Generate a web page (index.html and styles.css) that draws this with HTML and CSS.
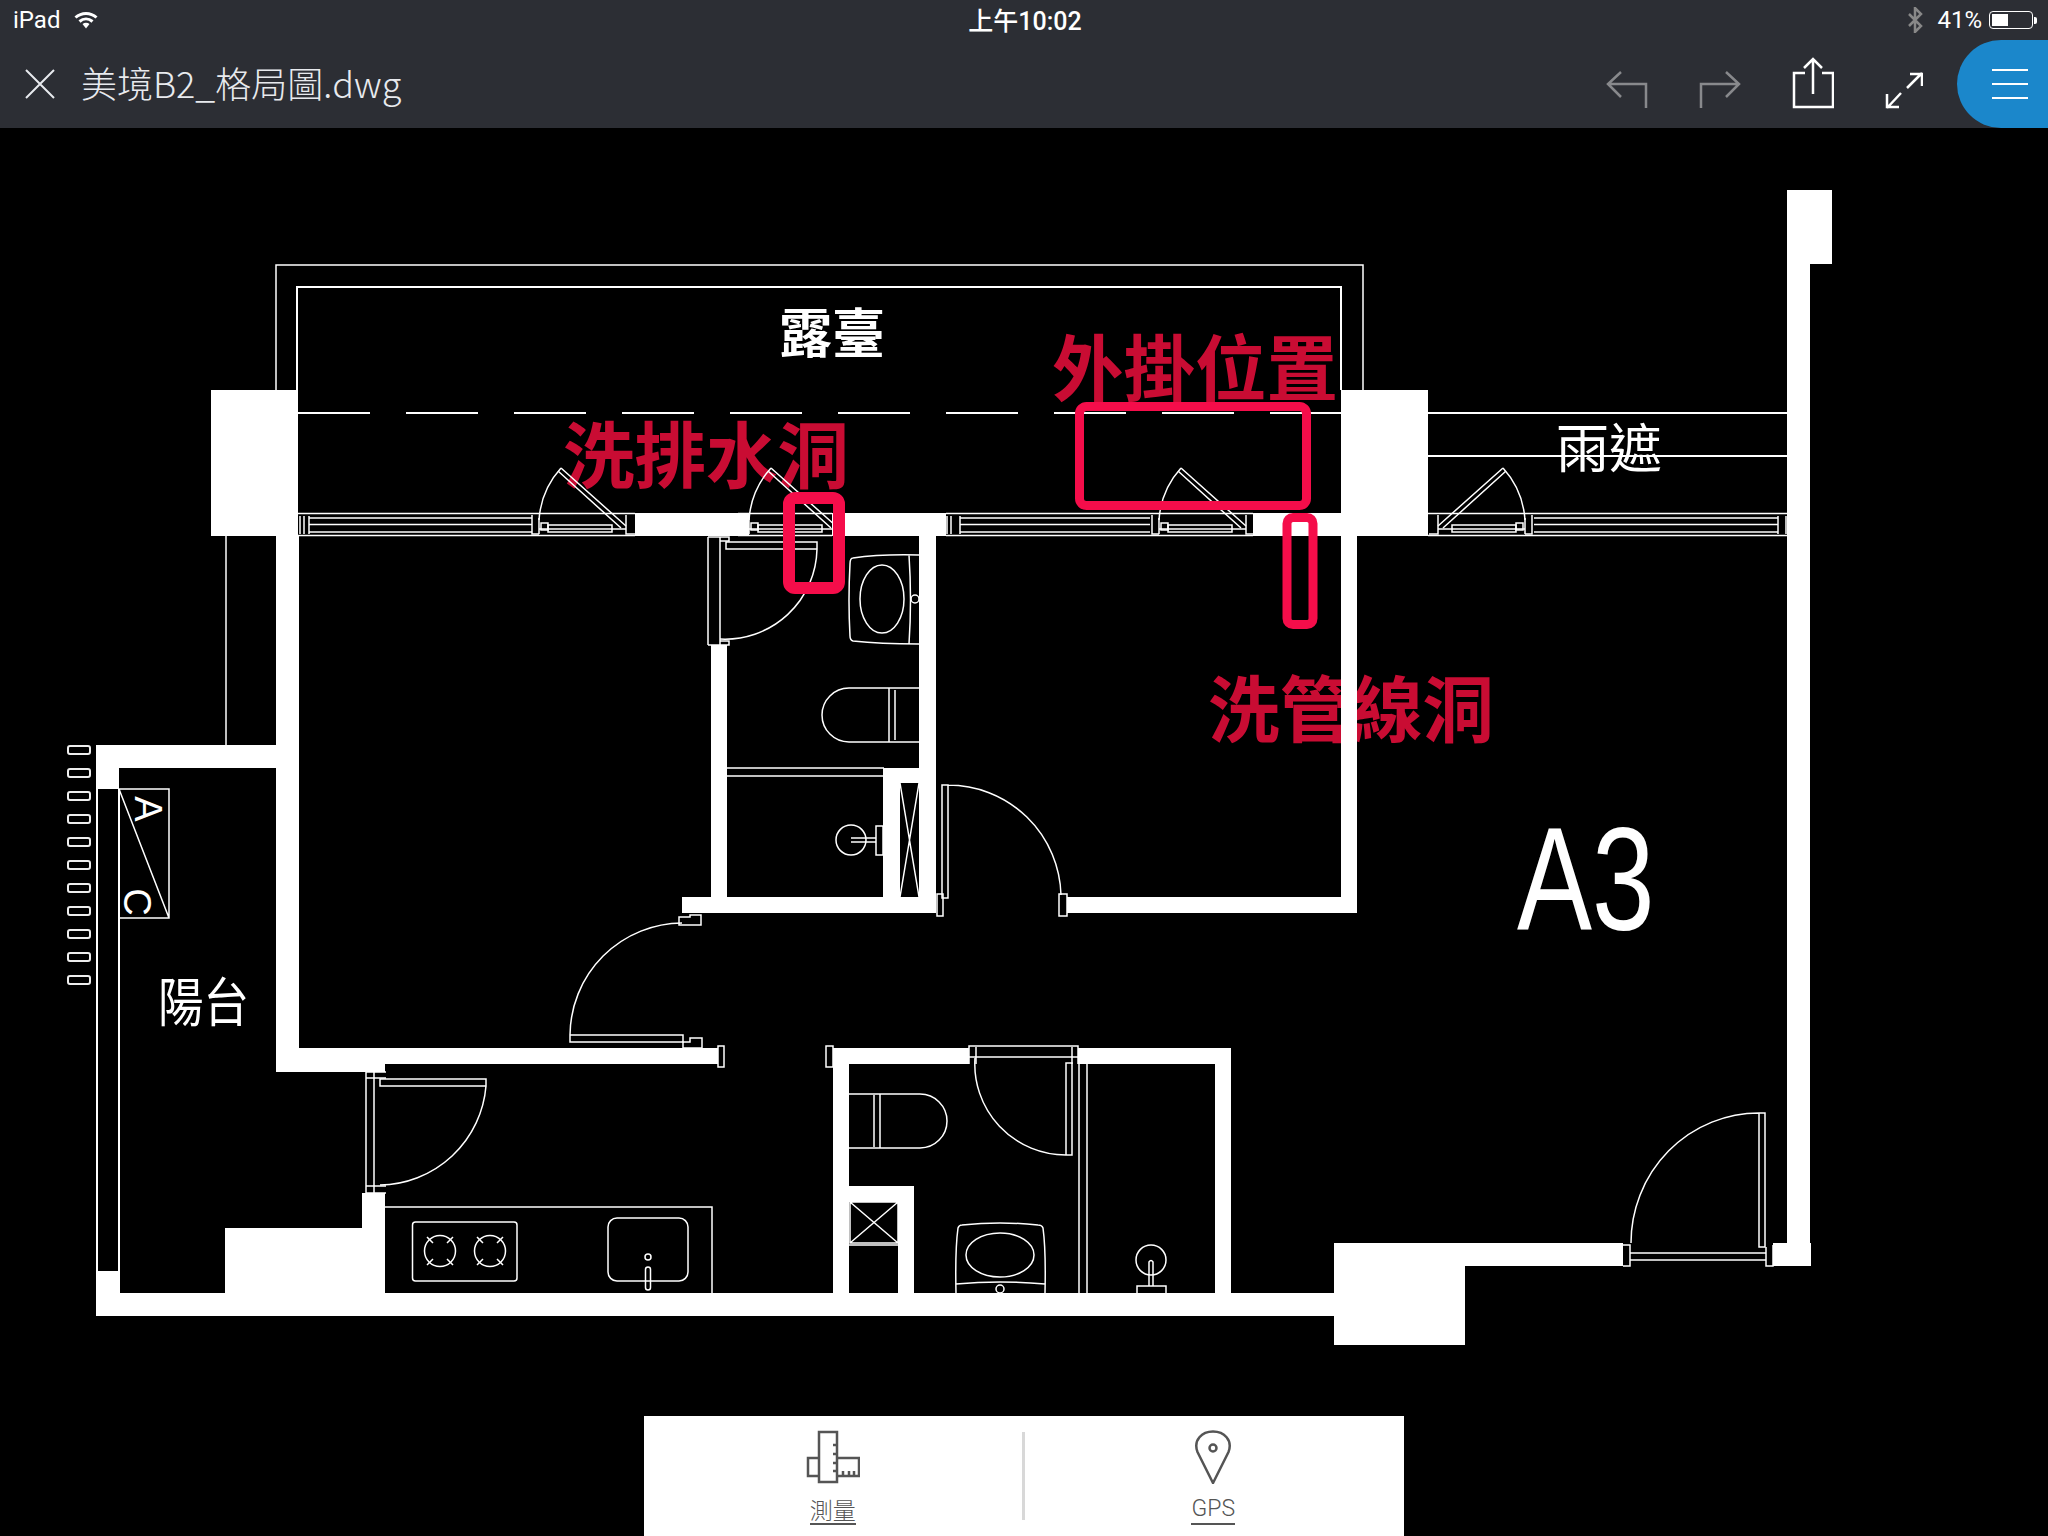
FILE: index.html

```html
<!DOCTYPE html>
<html>
<head>
    <meta name="viewport" content="width=device-width, initial-scale=1.0">
    <title>美境B2_格局圖.dwg</title>
    <link rel="stylesheet" href="styles.css">
</head>
<body>
    <div class="header">
        <div class="status-bar">
            <div class="status-left">
                <span>iPad</span>
                <svg class="wifi-icon" width="24" height="18" viewBox="0 0 24 18">
                    <path class="wifi-arc" d="M1.5 6.5C7.5 1 16.5 1 22.5 6.5"/>
                    <path class="wifi-arc" d="M5.5 10.5C9.5 7 14.5 7 18.5 10.5"/>
                    <path class="wifi-dot" d="M8.5 13C10.5 11.4 13.500 11.4 15.500 13L12 17.500Z"/>
                </svg>
            </div>
            <div class="status-time">上午10:02</div>
            <div class="status-right">
                <svg class="bt-icon" width="16" height="26" viewBox="0 0 16 26">
                    <path d="M2 7L14 19L8 25V1L14 7L2 19"/>
                </svg>
                <span>41%</span>
                <div class="battery"><div class="battery-level"></div></div>
                <div class="battery-tip"></div>
            </div>
        </div>
        <div class="toolbar">
            <svg class="close-icon" width="30" height="30" viewBox="0 0 30 30">
                <path d="M1 1L29 29M29 1L1 29"/>
            </svg>
            <div class="file-title">美境B2_格局圖.dwg</div>
            <div class="tool-icons">
                <svg class="tool-icon tool-off" width="42" height="38" viewBox="0 0 42 38">
                    <path d="M15 1L2 13L15 26M2 13H40V37"/>
                </svg>
                <svg class="tool-icon tool-off" width="42" height="38" viewBox="0 0 42 38">
                    <path d="M2 37V13H40M27 1L40 13L27 26"/>
                </svg>
                <svg class="tool-icon" width="42" height="52" viewBox="0 0 42 52">
                    <path d="M13 16H2V50H41V16H30M21 37V2M12 11L21 2L30 11"/>
                </svg>
                <svg class="tool-icon" width="38" height="37" viewBox="0 0 38 37">
                    <path d="M22 16L37 1M25 2H37V14M16 21L2 36M2 22V35H14"/>
                </svg>
            </div>
            <div class="menu-btn">
                <span></span>
                <span></span>
                <span></span>
            </div>
        </div>
    </div>

    <div class="drawing">
        <svg class="plan" width="2048" height="1408" viewBox="0 128 2048 1408">
            <defs>
                <g id="sliding-door">
                    <path d="M539 520Q541 490 561 468"/>
                    <path d="M561 468L626 526M558 471L621 528"/>
                    <path d="M539 518V534M548 525H612V532H548ZM539 529H626"/>
                    <path d="M532 515V534H539M626 515V534H635"/>
                    <rect x="541" y="523" width="7" height="7"/>
                </g>
            </defs>

            <!-- terrace outline -->
            <path class="line" d="M276 390V265H1363V390"/>
            <path class="line-bold" d="M297 390V287H1341V390"/>
            <path class="line-bold dash" d="M298 413H1341"/>
            <path class="line-bold" d="M1428 413H1787M1428 456H1787"/>
            <path class="line" d="M226 536V745"/>

            <!-- red labels go under the door lines -->
            <text class="red-label" x="563" y="482">洗排水洞</text>
            <text class="red-label" x="1052" y="395">外掛位置</text>
            <text class="red-label" x="1208" y="736">洗管線洞</text>

            <!-- walls -->
            <g class="wall">
                <rect x="211" y="390" width="87" height="146"/>
                <rect x="1341" y="390" width="87" height="146"/>
                <rect x="635" y="513" width="114" height="23"/>
                <rect x="832" y="513" width="114" height="23"/>
                <rect x="1253" y="513" width="88" height="23"/>
                <rect x="276" y="536" width="23" height="536"/>
                <rect x="276" y="1048" width="109" height="24"/>
                <rect x="385" y="1048" width="333" height="16"/>
                <rect x="96" y="745" width="180" height="23"/>
                <rect x="96" y="745" width="23" height="44"/>
                <rect x="96" y="789" width="2" height="482"/>
                <rect x="118" y="789" width="2" height="504"/>
                <rect x="96" y="1271" width="24" height="22"/>
                <rect x="96" y="1293" width="1238" height="23"/>
                <rect x="225" y="1228" width="160" height="65"/>
                <rect x="362" y="1193" width="23" height="35"/>
                <rect x="1334" y="1243" width="131" height="102"/>
                <rect x="1465" y="1243" width="158" height="23"/>
                <rect x="1773" y="1243" width="38" height="23"/>
                <rect x="1787" y="264" width="23" height="979"/>
                <rect x="1787" y="190" width="45" height="74"/>
                <rect x="711" y="645" width="16" height="252"/>
                <rect x="919" y="536" width="17" height="377"/>
                <rect x="682" y="897" width="254" height="16"/>
                <rect x="883" y="768" width="36" height="15"/>
                <rect x="883" y="783" width="17" height="114"/>
                <rect x="1341" y="536" width="16" height="377"/>
                <rect x="1067" y="897" width="290" height="16"/>
                <rect x="833" y="1048" width="16" height="245"/>
                <rect x="849" y="1048" width="120" height="16"/>
                <rect x="1078" y="1048" width="153" height="16"/>
                <rect x="1215" y="1064" width="16" height="229"/>
                <rect x="849" y="1186" width="65" height="16"/>
                <rect x="898" y="1202" width="16" height="91"/>
            </g>

            <!-- windows along the terrace -->
            <g class="line">
                <path d="M298 513.500H635M298 535.500H635M738 513.500H832M738 535.500H832M946 513.500H1253M946 535.500H1253M1428 513.500H1787M1428 535.500H1787"/>
                <path d="M309 518H532M309 524.500H532M309 532H532"/>
                <path d="M300 516V534M304 516V534M309 516V534"/>
                <path d="M960 518H1150M960 524.500H1150M960 532H1150M947 516V534M951 516V534M960 516V534"/>
                <path d="M1534 518H1778M1534 524.500H1778M1534 532H1778M1778 516V534M1786 516V534"/>
                <use href="#sliding-door"/>
                <use href="#sliding-door" x="210"/>
                <use href="#sliding-door" x="620"/>
                <use href="#sliding-door" transform="translate(2064 0) scale(-1 1)"/>
            </g>

            <!-- wc door and fittings -->
            <g class="line">
                <path d="M708 537V645M720 537V645M708 645H729V641H720M708 537H729V541H720"/>
                <path d="M726 542H817V549H726ZM817 549A92 92 0 0 1 720 639"/>
                <path d="M853 558Q880 554 919 555M919 644Q880 644 853 641Q850 640 850 636Q848 600 850 564Q850 558 853 558M909 555Q912 600 909 644"/>
                <ellipse cx="882" cy="599" rx="22" ry="34"/>
                <circle cx="915" cy="599" r="4"/>
                <path d="M919 688H849A27 27 0 0 0 849 742H919M889 688V742M895 690V740"/>
                <path d="M727 768H884M727 776H884"/>
                <circle cx="851" cy="840" r="15"/>
                <path d="M851 838H876M851 842H876M876 826H883V855H876Z"/>
                <path d="M900 783L919 897M919 783L900 897"/>
            </g>

            <!-- room door -->
            <g class="line">
                <path d="M942 785H948V898H942ZM948 785A113 113 0 0 1 1061 895"/>
                <path d="M937 894H943V916H937ZM1059 894H1067V916H1059Z"/>
            </g>

            <!-- living room door -->
            <g class="line">
                <path d="M570 1035H683V1042H570ZM570 1035A113 113 0 0 1 682 923"/>
                <path d="M679 917H690V915H701V925H679ZM683 1042H690V1038H702V1048H683Z"/>
                <path d="M718 1046H724V1067H718ZM826 1046H833V1067H826Z"/>
            </g>

            <!-- balcony door and kitchen -->
            <g class="line">
                <path d="M366 1072V1193M374 1072V1193M366 1072H386M366 1078H386M366 1186H386M366 1193H386"/>
                <path d="M380 1079H486V1086H380ZM486 1086A108 108 0 0 1 380 1185"/>
                <path d="M385 1207H712V1293"/>
                <rect x="412.500" y="1222" width="104.500" height="59" rx="3"/>
                <circle cx="440" cy="1251" r="15.500"/>
                <circle cx="490" cy="1251" r="15.500"/>
                <path d="M427 1237L433 1243M453 1237L447 1243M427 1265L433 1259M453 1265L447 1259"/>
                <path d="M477 1237L483 1243M503 1237L497 1243M477 1265L483 1259M503 1265L497 1259"/>
                <rect x="608" y="1218" width="80" height="63" rx="9"/>
                <circle cx="648" cy="1257" r="3"/>
                <rect x="645.500" y="1267" width="5" height="23" rx="2.500"/>
            </g>

            <!-- bathroom -->
            <g class="line">
                <path d="M969 1064V1046H1078V1064M969 1057H1078M976 1047V1064M1072 1047V1064"/>
                <path d="M975 1058A91 91 0 0 0 1066 1155H1072V1063H1066V1155"/>
                <path d="M1079 1064V1293M1087 1064V1293"/>
                <path d="M849 1094H920A27 27 0 0 1 920 1148H849M874 1095V1147M880 1094V1148"/>
                <path d="M850 1202H898V1243H850ZM850 1202L898 1243M898 1202L850 1243M849 1245H898"/>
                <path d="M956 1293Q955 1250 958 1228Q959 1225 962 1225Q1000 1221 1038 1225Q1042 1225 1043 1228Q1046 1250 1045 1293M956 1284Q1000 1280 1045 1284"/>
                <ellipse cx="1000" cy="1255" rx="34" ry="22"/>
                <circle cx="1000" cy="1289" r="4"/>
                <circle cx="1151" cy="1260" r="15"/>
                <path d="M1149 1286V1262Q1151 1259 1153 1262V1286M1137 1293V1286H1166V1293"/>
            </g>

            <!-- entrance door -->
            <g class="line">
                <path d="M1623 1245H1630V1266H1623M1630 1253H1766V1260H1630ZM1766 1247V1266H1773V1245"/>
                <path d="M1631 1243A128 130 0 0 1 1759 1113H1765V1247H1759V1113"/>
            </g>

            <!-- outside vents -->
            <g class="vent">
                <rect x="68" y="746" width="22" height="8" rx="2"/>
                <rect x="68" y="769" width="22" height="8" rx="2"/>
                <rect x="68" y="792" width="22" height="8" rx="2"/>
                <rect x="68" y="815" width="22" height="8" rx="2"/>
                <rect x="68" y="838" width="22" height="8" rx="2"/>
                <rect x="68" y="861" width="22" height="8" rx="2"/>
                <rect x="68" y="884" width="22" height="8" rx="2"/>
                <rect x="68" y="907" width="22" height="8" rx="2"/>
                <rect x="68" y="930" width="22" height="8" rx="2"/>
                <rect x="68" y="953" width="22" height="8" rx="2"/>
                <rect x="68" y="976" width="22" height="8" rx="2"/>
            </g>

            <!-- air conditioner box -->
            <g class="line">
                <path d="M119 789H169V918H119ZM119 789L169 918"/>
            </g>
            <text class="ac-label" transform="translate(135 809) rotate(90)" text-anchor="middle">A</text>
            <text class="ac-label" transform="translate(124 902) rotate(90)" text-anchor="middle">C</text>

            <!-- room labels -->
            <text class="room-label room-bold" x="779" y="353">露臺</text>
            <text class="room-label" x="1556" y="468">雨遮</text>
            <text class="room-label" transform="translate(158 1022) scale(.86 1)">陽台</text>
            <text class="unit-label" transform="translate(1517 930) scale(.77 1)">A3</text>

            <!-- markups -->
            <g class="red-box">
                <rect x="789" y="498" width="50" height="90" rx="6"/>
            </g>
            <g class="red-box red-box-thin">
                <rect x="1079.500" y="406.500" width="227" height="99" rx="7"/>
                <rect x="1287" y="517.500" width="26" height="107" rx="6"/>
            </g>
        </svg>

        <div class="bottom-panel">
            <div class="panel-item">
                <svg class="panel-icon" width="54" height="54" viewBox="0 0 54 54">
                    <path d="M13 2H31V52H13ZM13 28H2V46H13M31 28H53V46H31"/>
                    <path d="M27 15H31M27 24H31M27 33H31M27 41H31M37 46V41M43 46V41M48 46V41"/>
                </svg>
                <div class="panel-text">測量</div>
            </div>
            <div class="panel-divider"></div>
            <div class="panel-item panel-item-gps">
                <svg class="panel-icon" width="38" height="54" viewBox="0 0 38 54">
                    <path d="M19 53L3.500 22C-1 10 8 1.500 19 1.500S39 10 34.500 22Z"/>
                    <circle cx="19" cy="18" r="3.500"/>
                </svg>
                <div class="panel-text panel-text-gps">GPS</div>
            </div>
        </div>
    </div>
</body>
</html>
```

FILE: styles.css

```css
body {
    margin: 0;
    width: 2048px;
    height: 1536px;
    overflow: hidden;
    background: #000;
    font-family: "Noto Sans CJK TC", "Noto Sans", sans-serif;
}

.header {
    height: 128px;
    background: #2c2e34;
    color: #fff;
}

.status-bar {
    height: 40px;
    display: grid;
    grid-template-columns: 1fr auto 1fr;
    align-items: center;
    padding: 0 11px 0 13px;
    font-family: Roboto, "Noto Sans CJK TC", sans-serif;
    font-size: 24px;
}

.status-left {
    display: flex;
    align-items: center;
    gap: 14px;
}

.status-time {
    font-size: 25px;
    font-weight: 500;
    margin-top: -3px;
}

.status-right {
    display: flex;
    align-items: center;
    justify-content: flex-end;
}

.wifi-arc {
    fill: none;
    stroke: #fff;
    stroke-width: 3;
}

.wifi-dot {
    fill: #fff;
}

.bt-icon {
    margin-right: 14px;
}

.bt-icon path {
    fill: none;
    stroke: #888;
    stroke-width: 2.5;
}

.battery {
    width: 44px;
    height: 18px;
    margin-left: 7px;
    padding: 2px;
    box-sizing: border-box;
    border: 1.5px solid #fff;
    border-radius: 4px;
}

.battery-level {
    width: 16px;
    height: 100%;
    background: #fff;
}

.battery-tip {
    width: 3px;
    height: 7px;
    margin-left: 1px;
    background: #fff;
    border-radius: 0 2px 2px 0;
}

.toolbar {
    height: 88px;
    display: flex;
    align-items: center;
    padding-left: 25px;
}

.close-icon path {
    fill: none;
    stroke: #e8eaee;
    stroke-width: 2;
}

.file-title {
    margin-left: 26px;
    margin-top: -5px;
    font-size: 36px;
    font-weight: 300;
    color: #e8eaee;
}

.tool-icons {
    margin-left: auto;
    margin-right: 34px;
    display: flex;
    align-items: flex-end;
    gap: 51px;
    padding-bottom: 3px;
}

.tool-icon path {
    fill: none;
    stroke: #fff;
    stroke-width: 2.5;
}

.tool-off path {
    stroke: #88898c;
}

.menu-btn {
    width: 91px;
    height: 88px;
    box-sizing: border-box;
    padding: 0 20px 0 35px;
    display: flex;
    flex-direction: column;
    justify-content: center;
    gap: 12px;
    background: #1b87cb;
    border-radius: 44px 0 0 44px;
}

.menu-btn span {
    height: 2px;
    background: #fff;
}

.drawing {
    position: relative;
    height: 1408px;
    background: #000;
}

.plan {
    display: block;
}

.wall {
    fill: #fff;
}

.line {
    fill: none;
    stroke: #fff;
    stroke-width: 1.5;
}

.line-bold {
    fill: none;
    stroke: #fff;
    stroke-width: 2;
}

.dash {
    stroke-dasharray: 72 36;
}

.vent {
    fill: none;
    stroke: #eee;
    stroke-width: 2;
}

.room-label {
    font-family: "Noto Sans CJK TC", sans-serif;
    font-size: 53px;
    fill: #fff;
}

.room-bold {
    font-weight: 700;
}

.unit-label {
    font-family: "Liberation Sans", sans-serif;
    font-size: 146px;
    fill: #fff;
}

.ac-label {
    font-family: "Liberation Sans", sans-serif;
    font-size: 38px;
    fill: #fff;
}

.red-label {
    font-family: "Noto Sans CJK TC", sans-serif;
    font-size: 71.500px;
    font-weight: 700;
    fill: #c90c33;
}

.red-box {
    fill: none;
    stroke: #f50d4a;
    stroke-width: 12;
}

.red-box-thin {
    stroke-width: 9;
}

.bottom-panel {
    position: absolute;
    left: 644px;
    bottom: 0;
    width: 760px;
    height: 120px;
    display: flex;
    background: #fff;
    color: #555;
}

.panel-item {
    flex: 1;
    display: flex;
    flex-direction: column;
    align-items: center;
    padding-top: 14px;
}

.panel-item-gps {
    padding-right: 2px;
}

.panel-icon {
    display: block;
}

.panel-icon path, .panel-icon circle {
    fill: none;
    stroke: #555;
    stroke-width: 2.5;
}

.panel-text {
    margin-top: 12px;
    font-size: 23px;
    font-weight: 300;
    line-height: 27px;
    border-bottom: 2px solid #555;
}

.panel-text-gps {
    font-family: Roboto, sans-serif;
    font-size: 23px;
    line-height: 29px;
    margin-top: 10px;
}

.panel-divider {
    width: 3px;
    height: 88px;
    margin-top: 16px;
    background: #d8d8d8;
}
```
